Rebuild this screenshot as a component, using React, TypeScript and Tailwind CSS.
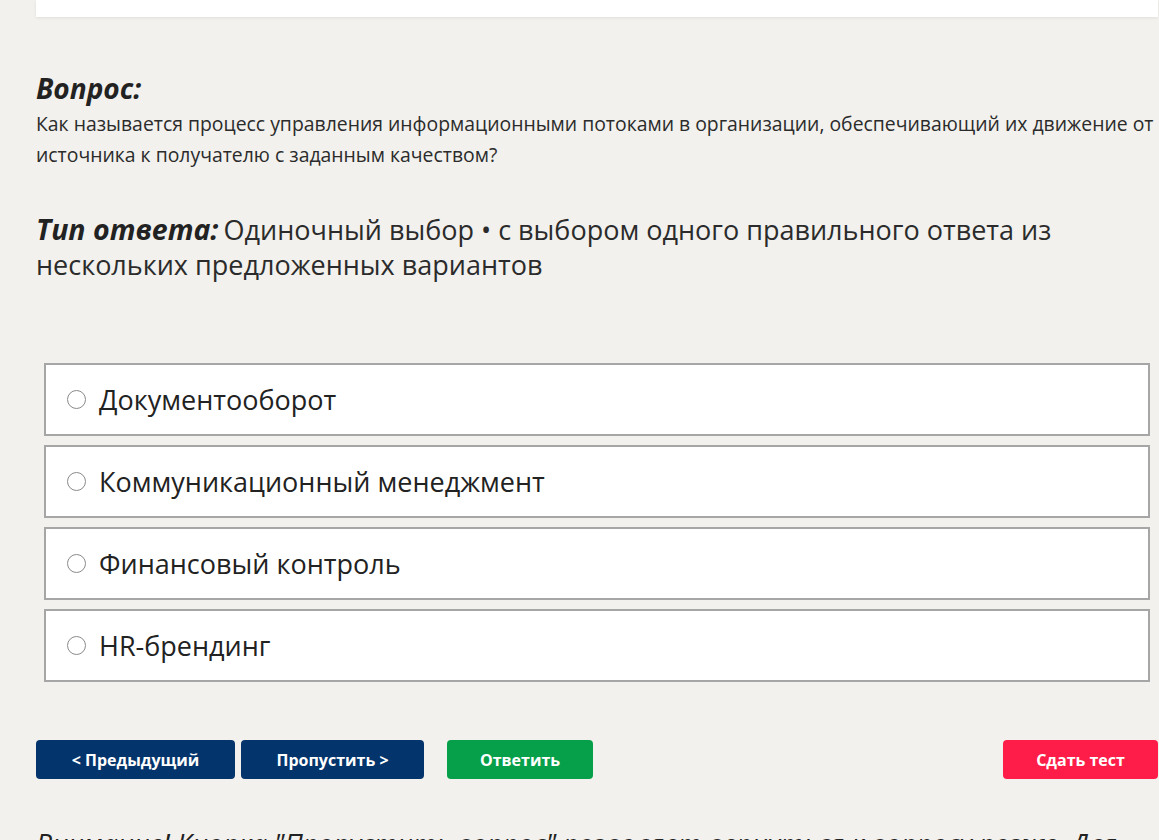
const OPTIONS = ['Документооборот', 'Коммуникационный менеджмент', 'Финансовый контроль', 'HR-брендинг']

export default function App() {
  return (
    <div
      className="min-h-screen w-full overflow-hidden bg-[#f2f1ed] text-[#222]"
      style={{ fontFamily: '"Open Sans", "Noto Sans", sans-serif' }}
    >
      <div className="ml-[36px] w-[1122px]">
        {/* top card, scrolled mostly out of view */}
        <div className="h-[17px] bg-white shadow-[0_1px_3px_rgba(0,0,0,0.08)]" />

        <div className="mt-[55px]">
          <h2 className="text-[28px] font-bold italic leading-[32px] text-[#222]">Вопрос:</h2>
          <p className="mt-[4px] text-[19.4px] leading-[31px] text-[#2b2b2b]">
            Как называется процесс управления информационными потоками в организации, обеспечивающий их движение от
            источника к получателю с заданным качеством?
          </p>
        </div>

        <div className="mt-[42px] w-[1040px] text-[27px] leading-[35px] text-[#2b2b2b]">
          <span className="mr-[-2px] text-[28.5px] font-bold italic text-[#222]">Тип ответа:</span> Одиночный выбор • с
          выбором одного правильного ответа из нескольких предложенных вариантов
        </div>

        <div className="mt-[81px] ml-[8px] mr-[8px] flex flex-col gap-[9px]">
          {OPTIONS.map((o) => (
            <label
              key={o}
              className="flex h-[73px] items-center gap-[13px] border-2 border-[#a6a6a6] bg-white pl-[21px]"
            >
              <span className="h-[19px] w-[19px] rounded-full border-[1.5px] border-[#8a8a8a] bg-white" />
              <span className="text-[27px] leading-none text-[#222]">{o}</span>
            </label>
          ))}
        </div>

        <div className="mt-[58px] flex items-center">
          <button className="h-[39px] w-[199px] rounded-[4px] bg-[#03346b] text-[16px] font-bold text-white">
            &lt; Предыдущий
          </button>
          <button className="ml-[6px] h-[39px] w-[183px] rounded-[4px] bg-[#03346b] text-[16px] font-bold text-white">
            Пропустить &gt;
          </button>
          <button className="ml-[23px] h-[39px] w-[146px] rounded-[4px] bg-[#06a04b] text-[16px] font-bold text-white">
            Ответить
          </button>
          <button className="ml-auto h-[39px] w-[155px] rounded-[4px] bg-[#fe1c48] text-[16px] font-bold text-white">
            Сдать тест
          </button>
        </div>

        <p className="mt-[47px] text-[27px] italic leading-[36px] text-[#222]">
          Внимание! Кнопка "Пропустить вопрос" позволяет вернуться к вопросу позже. Для ответа нажмите "Ответить".
        </p>
      </div>
    </div>
  )
}
